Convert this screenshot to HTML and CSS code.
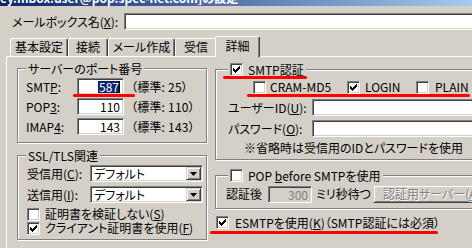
FILE: index.html
```html
<!DOCTYPE html>
<html lang="ja">
<head>
<meta charset="utf-8">
<link rel="stylesheet" href="styles.css">
</head>
<body>
<div class="win">
  <div class="titlebar"><div class="title">ey.mbox.user@pop.spec-net.com]の設定</div></div>
  <div class="namerow">
    <span class="namelbl">メールボックス名(<u>X</u>):</span>
    <span class="edit name-edit"></span>
  </div>
  <div class="tabs">
    <span class="tab t1">基本設定</span>
    <span class="tab t2">接続</span>
    <span class="tab t3">メール作成</span>
    <span class="tab t4">受信</span>
    <span class="tab sel">詳細</span>
  </div>
  <div class="panel">
    <div class="col colL">
      <div class="group g-ports">
        <div class="gtitle">サーバーのポート番号</div>
        <div class="ports">
          <span class="lbl">SMT<u>P</u>:</span>
          <span class="edit num"><span class="hl">587</span><span class="caret"></span></span>
          <span class="std">（標準: 25）</span>
          <span class="lbl">POP<u>3</u>:</span>
          <span class="edit num">110</span>
          <span class="std">（標準: 110）</span>
          <span class="lbl">IMAP<u>4</u>:</span>
          <span class="edit num">143</span>
          <span class="std">（標準: 143）</span>
        </div>
      </div>
      <div class="group g-ssl">
        <div class="gtitle">SSL/TLS関連</div>
        <div class="sslrows">
          <span class="lbl">受信用(<u>C</u>):</span>
          <span class="edit combo"><span class="combo-text">デフォルト</span><span class="drop"><svg width="7" height="4" viewBox="0 0 7 4"><path d="M0 0h7l-3.5 4z" fill="#000"/></svg></span></span>
          <span class="lbl">送信用(<u>I</u>):</span>
          <span class="edit combo"><span class="combo-text">デフォルト</span><span class="drop"><svg width="7" height="4" viewBox="0 0 7 4"><path d="M0 0h7l-3.5 4z" fill="#000"/></svg></span></span>
        </div>
        <div class="checks">
          <div class="chk"><span class="cb"></span><span>証明書を検証しない(<u>S</u>)</span></div>
          <div class="chk"><span class="cb"><svg class="tick" width="7" height="7" viewBox="0 0 7 7" shape-rendering="crispEdges"><path d="M0 2h1v3H0zM1 3h1v3H1zM2 4h1v3H2zM3 3h1v3H3zM4 2h1v3H4zM5 1h1v3H5zM6 0h1v3H6z" fill="#000"/></svg></span><span>クライアント証明書を使用(<u>F</u>)</span></div>
        </div>
      </div>
    </div>
    <div class="col colR">
      <div class="group g-auth">
        <div class="gtitle">
          <span class="cb"><svg class="tick" width="7" height="7" viewBox="0 0 7 7" shape-rendering="crispEdges"><path d="M0 2h1v3H0zM1 3h1v3H1zM2 4h1v3H2zM3 3h1v3H3zM4 2h1v3H4zM5 1h1v3H5zM6 0h1v3H6z" fill="#000"/></svg></span>
          <span>SMTP認証</span>
        </div>
        <div class="methods">
          <div class="chk m-cram"><span class="cb"></span><span>CRAM-MD5</span></div>
          <div class="chk m-login"><span class="cb"><svg class="tick" width="7" height="7" viewBox="0 0 7 7" shape-rendering="crispEdges"><path d="M0 2h1v3H0zM1 3h1v3H1zM2 4h1v3H2zM3 3h1v3H3zM4 2h1v3H4zM5 1h1v3H5zM6 0h1v3H6z" fill="#000"/></svg></span><span>LOGIN</span></div>
          <div class="chk m-plain"><span class="cb"></span><span>PLAIN</span></div>
        </div>
        <div class="idrows">
          <span class="lbl">ユーザーID(<u>U</u>):</span>
          <span class="edit long"></span>
          <span class="lbl">パスワード(<u>O</u>):</span>
          <span class="edit long"></span>
        </div>
        <div class="note">※省略時は受信用のIDとパスワードを使用</div>
      </div>
      <div class="group g-pop">
        <div class="gtitle">
          <span class="cb"></span>
          <span>POP <u>b</u>efore SMTPを使用</span>
        </div>
        <div class="poprow">
          <span class="lbl">認証後</span>
          <span class="edit num dis">300</span>
          <span class="wait">ミリ秒待つ</span>
          <span class="btn dis-text">認証用サーバー(<u>A</u>)...</span>
        </div>
      </div>
      <div class="chk esmtp"><span class="cb"><svg class="tick" width="7" height="7" viewBox="0 0 7 7" shape-rendering="crispEdges"><path d="M0 2h1v3H0zM1 3h1v3H1zM2 4h1v3H2zM3 3h1v3H3zM4 2h1v3H4zM5 1h1v3H5zM6 0h1v3H6z" fill="#000"/></svg></span><span>ESMTPを使用(<u>K</u>)（SMTP認証には必須）</span></div>
    </div>
  </div>
  <div class="mark m1"></div>
  <div class="mark m2"></div>
  <div class="mark m3"></div>
  <div class="mark m4"></div>
</div>
</body>
</html>
```

FILE: styles.css
```css
* { box-sizing: border-box; }
html, body { margin: 0; padding: 0; }
body {
  width: 472px;
  height: 248px;
  overflow: hidden;
  background: #d4d0c8;
  font-family: "Noto Sans CJK JP", "Noto Sans", sans-serif;
  font-size: 12px;
  line-height: 14px;
  color: #000;
  font-feature-settings: "palt";
}
u { text-decoration-thickness: 1px; text-underline-offset: 1px; }
.win { position: relative; width: 472px; height: 248px; overflow: hidden; }

.titlebar {
  height: 6px;
  background: linear-gradient(to right, #0a246a, #a6caf0);
  overflow: hidden;
}
.title {
  color: #fff;
  font-weight: bold;
  line-height: 14px;
  margin-top: -9px;
  white-space: nowrap;
}

.namerow {
  display: flex;
  align-items: center;
  margin-top: 7px;
  padding-left: 12px;
  height: 17px;
  white-space: nowrap;
}
.namelbl { width: 112px; flex: none; }
.name-edit { width: 360px; flex: none; }

.edit {
  display: block;
  height: 17px;
  background: #fff;
  border: 1px solid;
  border-color: #808080 #fff #fff #808080;
  box-shadow: inset 1px 1px 0 #404040, inset -1px -1px 0 #d4d0c8;
}

.tabs {
  display: flex;
  align-items: flex-end;
  height: 20px;
  margin-top: 6px;
  padding-left: 10px;
  position: relative;
  z-index: 1;
  white-space: nowrap;
}
.tab {
  height: 18px;
  flex: none;
  display: flex;
  align-items: center;
  justify-content: center;
  border-top: 1px solid #fff;
  border-left: 1px solid #fff;
  border-right: 1px solid #404040;
  box-shadow: inset -1px 0 0 #808080;
  border-radius: 2px 2px 0 0;
  padding-bottom: 1px;
}
.t1 { width: 58px; }
.t2 { width: 40px; }
.t3 { width: 67px; }
.t4 { width: 42px; }
.sel {
  width: 45px;
  height: 21px;
  margin-left: -2px;
  margin-bottom: -1px;
  background: #d4d0c8;
  padding-bottom: 2px;
}

.panel {
  margin-left: 6px;
  border-top: 1px solid #fff;
  border-left: 1px solid #fff;
  display: flex;
  gap: 8px;
  padding: 11px 0 0 10px;
  height: 200px;
  white-space: nowrap;
}
.col { flex: none; display: flex; flex-direction: column; }
.colL { width: 190px; }
.colR { width: 300px; margin-top: 1px; }

.group {
  display: flex;
  flex-direction: column;
  border: 1px solid #808080;
  box-shadow: inset 1px 1px 0 #fff, 1px 1px 0 #fff;
}
.gtitle {
  align-self: flex-start;
  display: flex;
  align-items: center;
  gap: 5px;
  height: 15px;
  line-height: 15px;
  margin: -8px 0 0 8px;
  padding: 0 2px;
  background: #d4d0c8;
}

.g-ports { height: 75px; }
.ports {
  display: grid;
  grid-template-columns: 51px 47px auto;
  grid-auto-rows: 17px;
  row-gap: 3px;
  align-items: center;
  margin: 2px 0 0 8px;
}
.num {
  display: flex;
  align-items: center;
  justify-content: flex-end;
  padding-right: 3px;
  line-height: 13px;
}
.hl { background: #0a246a; color: #fff; padding: 0 1px; line-height: 12px; }
.caret { width: 1px; height: 12px; background: #000; margin-left: -1px; }
.std { margin-left: 7px; letter-spacing: 0.2px; }

.g-ssl { margin-top: 12px; height: 85px; }
.sslrows {
  display: grid;
  grid-template-columns: 63px 113px;
  grid-auto-rows: 17px;
  row-gap: 4px;
  align-items: center;
  margin: 2px 0 0 9px;
}
.combo { display: flex; align-items: stretch; padding: 1px; }
.combo-text { flex: 1; padding-left: 2px; line-height: 13px; }
.drop {
  width: 15px;
  flex: none;
  display: flex;
  align-items: center;
  justify-content: center;
  background: #d4d0c8;
  border: 1px solid;
  border-color: #d4d0c8 #404040 #404040 #d4d0c8;
  box-shadow: inset 1px 1px 0 #fff, inset -1px -1px 0 #808080;
}
.checks { margin: 4px 0 0 9px; display: flex; flex-direction: column; }
.chk { display: flex; align-items: center; gap: 5px; height: 14px; line-height: 14px; }

.cb {
  width: 13px;
  height: 13px;
  flex: none;
  display: flex;
  align-items: center;
  justify-content: center;
  background: #fff;
  border: 1px solid;
  border-color: #808080 #fff #fff #808080;
  box-shadow: inset 1px 1px 0 #404040, inset -1px -1px 0 #d4d0c8;
}
.tick { display: block; }

.g-auth { height: 91px; }
.g-auth .gtitle, .g-pop .gtitle { margin-left: 12px; }
.methods { display: flex; margin: 3px 0 0 37px; }
.m-cram { width: 94px; gap: 4px; }
.m-login { width: 69px; }
.m-plain { gap: 6px; }
.idrows {
  display: grid;
  grid-template-columns: 84px 200px;
  grid-auto-rows: 17px;
  row-gap: 4px;
  align-items: center;
  margin: 5px 0 0 12px;
}
.note { margin: 4px 0 0 28px; height: 14px; line-height: 14px; }

.g-pop { margin-top: 15px; height: 34px; }
.poprow {
  display: grid;
  grid-template-columns: 42px 44px 61px 120px;
  grid-auto-rows: 18px;
  align-items: center;
  margin: 2px 0 0 10px;
}
.dis { background: #d4d0c8; color: #808080; }
.wait { padding-left: 4px; }
.btn {
  height: 18px;
  display: flex;
  align-items: center;
  padding-left: 9px;
  border: 1px solid;
  border-color: #d4d0c8 #404040 #404040 #d4d0c8;
  box-shadow: inset 1px 1px 0 #fff, inset -1px -1px 0 #808080;
}
.dis-text { color: #808080; text-shadow: 1px 1px 0 #fff; }

.esmtp { margin: 7px 0 0 1px; height: 13px; gap: 6px; }

.mark { position: absolute; background: #ff0000; height: 3px; border-radius: 2px; }
.m1 { left: 73px; top: 94px; width: 62px; }
.m2 { left: 223px; top: 76px; width: 84px; }
.m3 { left: 247px; top: 94px; width: 223px; }
.m4 { left: 210px; top: 231px; width: 228px; }
```
